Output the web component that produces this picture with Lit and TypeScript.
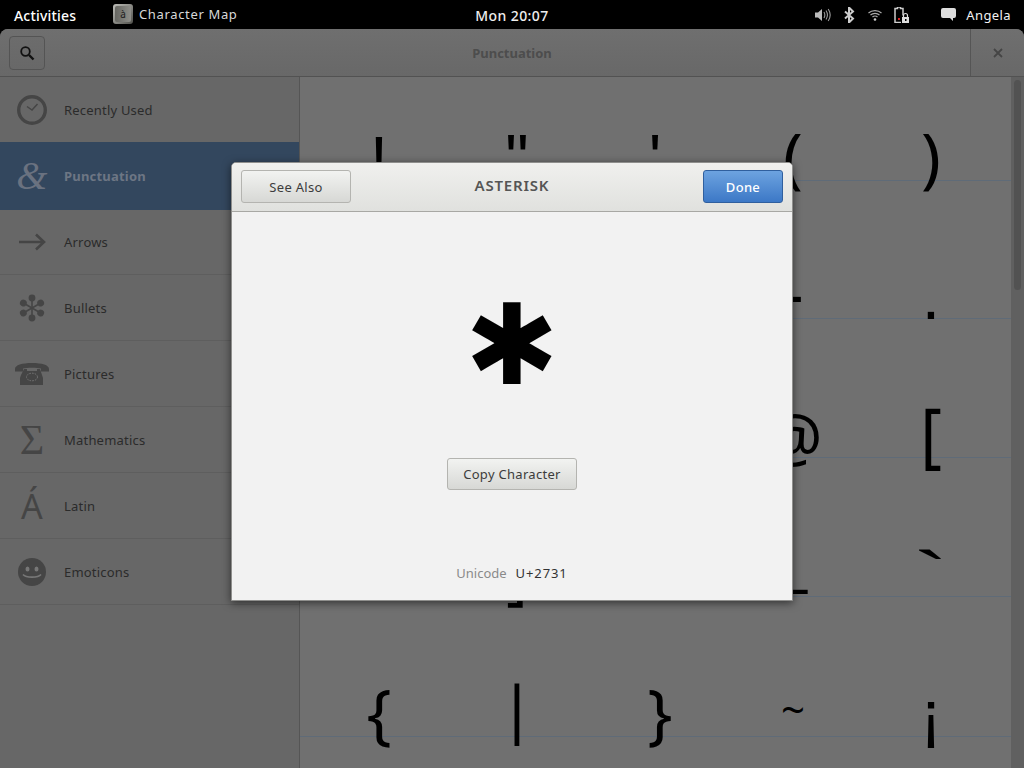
import { LitElement, html, css, svg } from "lit";
import { customElement } from "lit/decorators.js";

const ICON = "#454545";

const clock = html`<svg width="32" height="32" viewBox="0 0 32 32"><circle cx="16" cy="16" r="13.300" fill="none" stroke="${ICON}" stroke-width="3.400"/><path d="M11 12.500l5 3.500 5.500-6" fill="none" stroke="${ICON}" stroke-width="1.500"/></svg>`;
const amp = html`<span class="glyph amp">&amp;</span>`;
const arrow = html`<svg width="32" height="20" viewBox="0 0 32 20"><path d="M3 10h25M20 2.500l8 7.500-8 7.500" fill="none" stroke="${ICON}" stroke-width="2.600"/></svg>`;
const spokes = [0, 60, 120, 180, 240, 300];
const bullets = html`<svg width="32" height="32" viewBox="0 0 32 32">${spokes.map(
  (a) => svg`<g transform="rotate(${a} 16 16)"><path d="M16 16V6" stroke="${ICON}" stroke-width="1.600"/><circle cx="16" cy="6" r="3.400" fill="${ICON}"/></g>`
)}</svg>`;
const phone = html`<svg width="36" height="24" viewBox="0 0 36 24"><path d="M1 7C1 3 8 1 18 1s17 2 17 6v2.500h-8V6.500C23 5.500 13 5.500 9 6.500V9.500H1z" fill="${ICON}"/><path d="M10 7h3v2h10V7h3l2 6 1 3v7H6v-7l1-3z" fill="${ICON}"/><ellipse cx="18" cy="15" rx="5.500" ry="3.800" fill="none" stroke="#777" stroke-width="1" stroke-dasharray="1.500 1.200"/></svg>`;
const sigma = html`<span class="glyph sigma">Σ</span>`;
const aacute = html`<span class="glyph aacute">Á</span>`;
const smile = html`<svg width="30" height="30" viewBox="0 0 30 30"><circle cx="15" cy="15" r="14" fill="${ICON}"/><ellipse cx="10.500" cy="12" rx="2" ry="2.600" fill="#777"/><ellipse cx="19.500" cy="12" rx="2" ry="2.600" fill="#777"/><path d="M6 17.500c3 3.500 15 3.500 18 0" fill="none" stroke="#777" stroke-width="1.600"/></svg>`;

const rows = [
  { label: "Recently Used", icon: clock, cls: "first" },
  { label: "Punctuation", icon: amp, cls: "active" },
  { label: "Arrows", icon: arrow, cls: "third" },
  { label: "Bullets", icon: bullets, cls: "" },
  { label: "Pictures", icon: phone, cls: "" },
  { label: "Mathematics", icon: sigma, cls: "" },
  { label: "Latin", icon: aacute, cls: "" },
  { label: "Emoticons", icon: smile, cls: "" },
];

/* Cells wholly behind the dialog stay empty: the reference shows nothing of them. */
const chars = [
  ["!", '"', "'", "(", ")"],
  ["", "", "", "-", "."],
  ["", "", "", "@", "["],
  ["", "]", "", "_", "`"],
  ["{", "|", "}", "~", "¡"],
];

/* The reference's glyph font draws a few characters differently from Noto Sans. */
const LIB = `font-family:'Liberation Sans',sans-serif;`;
const tweak: Record<string, string> = {
  "~": "font-size:42px;transform:translateY(-2px)",
  _: "transform:translateY(-13px)",
  "`": `${LIB}transform:translate(0,3px) scale(1.6,0.95)`,
  "|": "transform:translateY(-4px) scaleY(0.94)",
  "-": "transform:translateY(-2px)",
  "}": "transform:translateX(5px)",
  "[": "transform:scaleY(1.09)",
  "@": "transform:translateY(3px)",
  "!": `${LIB}transform:translateY(5px)`,
  '"': `${LIB}transform:translateY(3px)`,
  "'": `${LIB}transform:translateY(3px)`,
  ".": `${LIB}transform:translateY(3px)`,
  "¡": `${LIB}transform:translateY(3px)`,
};

@customElement("app-root")
export class AppRoot extends LitElement {
  static styles = css`
    :host {
      display: flex;
      flex-direction: column;
      width: 1024px;
      height: 768px;
      overflow: hidden;
      background: #000;
      position: relative;
      font-family: "Noto Sans", "Open Sans", sans-serif;
    }
    .top {
      height: 29px;
      flex: none;
      display: flex;
      align-items: center;
      color: #f2f2f2;
      font-size: 13px;
      position: relative;
    }
    .activities { margin-left: 14px; width: 99px; font-weight: 500; font-size: 14px; letter-spacing: 0.2px; color: #fff; padding-top: 2px; }
    .appicon {
      width: 20px;
      height: 20px;
      padding: 2px;
      border-radius: 3px;
      background: linear-gradient(135deg, #bdbdb8 0%, #8a8a85 50%, #4f4f4a 100%);
      box-sizing: border-box;
      margin-top: -1px;
      margin-right: 6px;
    }
    .keycap {
      height: 100%;
      border-radius: 2px;
      background: linear-gradient(90deg, #666661, #8f8f8a);
      color: #1c1c1c;
      font-size: 10px;
      line-height: 16px;
      text-align: center;
    }
    .appname { color: #d8d8d8; letter-spacing: 0.65px; margin-top: -2px; }
    .clock { position: absolute; left: 0; right: 0; top: 6px; text-align: center; font-weight: 500; color: #eee; font-size: 14px; letter-spacing: 0.4px; }
    .status { margin-left: auto; display: flex; align-items: center; margin-right: 13px; }
    .status svg { display: block; }
    .s1 { margin-right: 13px; }
    .s2 { margin-right: 13px; }
    .s3 { margin-right: 12px; }
    .s4 { margin-right: 32px; }
    .user { color: #f2f2f2; margin-left: 10px; letter-spacing: 0.4px; }

    .win {
      flex: 1;
      min-height: 0;
      display: flex;
      flex-direction: column;
      border-radius: 8px 8px 0 0;
      overflow: hidden;
      background: #676767;
    }
    .head {
      height: 48px;
      box-sizing: border-box;
      flex: none;
      display: flex;
      align-items: center;
      justify-content: space-between;
      background: linear-gradient(#6f6f6f, #686868);
      border-bottom: 1px solid #525252;
      position: relative;
    }
    .search {
      width: 36px;
      height: 34px;
      margin-left: 9px;
      box-sizing: border-box;
      border: 1px solid #545454;
      border-radius: 4px;
      display: flex;
      align-items: center;
      justify-content: center;
      background: linear-gradient(#6c6c6c, #686868);
    }
    .title {
      position: absolute;
      left: 0;
      right: 0;
      text-align: center;
      font-weight: 700;
      font-size: 13px;
      color: #4d4d4d;
    }
    .close {
      width: 54px;
      box-sizing: border-box;
      align-self: stretch;
      border-left: 1px solid #555;
      display: flex;
      align-items: center;
      justify-content: center;
      position: relative;
    }
    .body { flex: 1; min-height: 0; display: flex; }
    .side {
      width: 300px;
      box-sizing: border-box;
      flex: none;
      border-right: 1px solid #555;
      background: #676767;
    }
    .row {
      height: 65px;
      box-sizing: border-box;
      display: flex;
      align-items: center;
      border-bottom: 1px solid #5e5e5e;
      color: #2b2b2b;
      font-size: 13px;
      letter-spacing: 0.2px;
    }
    .row + .row { height: 66px; }
    .row.first { border-bottom: none; }
    .row.row.third { height: 65px; }
    .row.row.active { height: 68px; background: #33475e; color: #6d7684; font-weight: 700; border-bottom: none; }
    .ic { width: 64px; display: flex; justify-content: center; flex: none; }
    .glyph { color: #454545; line-height: 36px; font-weight: 400; }
    .amp { font-family: "Liberation Serif", serif; font-style: italic; font-size: 40px; color: #6a7280; }
    .sigma { font-family: "Liberation Serif", serif; font-size: 42px; }
    .aacute { font-family: "Noto Sans", sans-serif; font-size: 34px; }

    .grid {
      flex: 1;
      min-width: 0;
      background: #707070;
      display: grid;
      grid-template-rows: 104px 138px 139px 139px 140px;
      align-content: start;
      overflow: hidden;
    }
    .gr {
      display: grid;
      grid-template-columns: repeat(5, 138px);
      padding-left: 10px;
      border-bottom: 1px solid #5f6b78;
    }
    .cell {
      display: flex;
      align-items: flex-end;
      justify-content: center;
      margin-bottom: -8px;
    }
    .ch {
      font-family: "Noto Sans", sans-serif;
      font-size: 66px;
      line-height: 66px;
      color: #000;
      display: block;
    }
    .scroll { width: 13px; flex: none; background: #606060; padding: 3px 3px 0; box-sizing: border-box; }
    .thumb { height: 210px; background: #525252; border-radius: 4px; }

    .dialog {
      position: absolute;
      left: 231px;
      top: 162px;
      width: 562px;
      height: 439px;
      box-sizing: border-box;
      border: 1px solid #8f8f8d;
      border-radius: 5px 5px 0 0;
      background: #f2f2f2;
      box-shadow: 0 2px 8px rgba(0, 0, 0, 0.55);
      display: flex;
      flex-direction: column;
      align-items: center;
    }
    .dhead {
      align-self: stretch;
      height: 49px;
      flex: none;
      box-sizing: border-box;
      display: flex;
      align-items: center;
      justify-content: space-between;
      padding: 0 9px 1px;
      background: linear-gradient(#f0f0ee, #e0e1de);
      border-bottom: 1px solid #a8a8a4;
      border-radius: 4px 4px 0 0;
      position: relative;
    }
    .dtitle {
      position: absolute;
      left: 0;
      right: 0;
      top: 12px;
      text-align: center;
      font-weight: 600;
      font-size: 15px;
      letter-spacing: 0.8px;
      color: #555;
      pointer-events: none;
    }
    .btn {
      box-sizing: border-box;
      height: 33px;
      border: 1px solid #b4b4b0;
      border-radius: 3px;
      background: linear-gradient(#f2f3f1, #d7d8d5);
      color: #3c3c3c;
      font-size: 13px;
      letter-spacing: 0.3px;
      display: flex;
      align-items: center;
      justify-content: center;
    }
    .also { width: 110px; }
    .done {
      width: 80px;
      background: linear-gradient(#6da3e0, #3c78c6);
      border-color: #2f5f9e;
      color: #fff;
      font-weight: 500;
    }
    .big {
      font-family: "DejaVu Sans", sans-serif;
      font-size: 112px;
      line-height: 160px;
      height: 160px;
      color: #000;
      margin-top: 53px;
    }
    .copy { width: 130px; height: 32px; margin-top: 33px; }
    .uni { margin-top: auto; margin-bottom: 18px; font-size: 13px; display: flex; gap: 9px; letter-spacing: 0.9px; color: #333; }
    .uni span { color: #8a8a8a; letter-spacing: 0; }
  `;

  render() {
    return html`
      <div class="top">
        <div class="activities">Activities</div>
        <div class="appicon"><div class="keycap">à</div></div>
        <div class="appname">Character Map</div>
        <div class="clock">Mon 20:07</div>
        <div class="status">
          <svg class="s1" width="16" height="14" viewBox="0 0 16 14"><path d="M0 4.500h3L7 1v12L3 9.500H0z" fill="#bbb"/><path d="M9 4c1 1.800 1 4.200 0 6M11 2.500c1.800 2.800 1.800 6.200 0 9M13.200 1c2.400 3.600 2.400 8.400 0 12" fill="none" stroke="#999" stroke-width="1.100"/></svg>
          <svg class="s2" width="11" height="16" viewBox="0 0 11 16"><path d="M1 4.500l8 7-4 4V.5l4 4-8 7" fill="none" stroke="#ccc" stroke-width="2"/></svg>
          <svg class="s3" width="14" height="12" viewBox="0 0 14 12"><path d="M.5 4c3.500-3.200 9.500-3.200 13 0M2.500 6c2.500-2.200 6.500-2.200 9 0M4.500 8c1.300-1.100 3.700-1.100 5 0" fill="none" stroke="#aaa" stroke-width="1.200"/><circle cx="7" cy="10.500" r="1.300" fill="#ccc"/></svg>
          <svg class="s4" width="15" height="16" viewBox="0 0 15 16"><path d="M3.500 0h3v1.500H9v14H1V1.500h2.500z" fill="none" stroke="#ccc" stroke-width="1.500"/><rect x="4" y="11" width="2" height="2" fill="#d22"/><rect x="7" y="8.500" width="8" height="7.500" fill="#000"/><rect x="8" y="10" width="7" height="6" fill="#ddd"/><path d="M9.500 10V8.500a2 2 0 0 1 4 0V10" fill="none" stroke="#ddd" stroke-width="1.200"/><rect x="11" y="12" width="1.500" height="2" fill="#000"/></svg>
          <svg width="15" height="13" viewBox="0 0 15 13"><path d="M2 0h11a2 2 0 0 1 2 2v6a2 2 0 0 1-2 2h-1v3l-3-3H2a2 2 0 0 1-2-2V2a2 2 0 0 1 2-2z" fill="#ddd"/></svg>
          <div class="user">Angela</div>
        </div>
      </div>
      <div class="win">
        <div class="head">
          <div class="title">Punctuation</div>
          <div class="search">
            <svg width="16" height="16" viewBox="0 0 16 16"><circle cx="6.500" cy="6.500" r="4.300" fill="none" stroke="#111" stroke-width="1.800"/><path d="M10 10l4.500 4.500" stroke="#111" stroke-width="2.400"/></svg>
          </div>
          <div class="close">
            <svg width="10" height="10" viewBox="0 0 10 10"><path d="M1 1l8 8M9 1l-8 8" stroke="#454545" stroke-width="1.800"/></svg>
          </div>
        </div>
        <div class="body">
          <div class="side">
            ${rows.map(
              (r) => html`<div class="row ${r.cls}"><div class="ic">${r.icon}</div><div>${r.label}</div></div>`
            )}
          </div>
          <div class="grid">
            ${chars.map(
              (row) =>
                html`<div class="gr">${row.map(
                  (c) => html`<div class="cell"><span class="ch" style=${tweak[c] ?? ""}>${c}</span></div>`
                )}</div>`
            )}
          </div>
          <div class="scroll"><div class="thumb"></div></div>
        </div>
      </div>
      <div class="dialog">
        <div class="dhead">
          <div class="dtitle">ASTERISK</div>
          <div class="btn also">See Also</div>
          <div class="btn done">Done</div>
        </div>
        <div class="big">✱</div>
        <div class="btn copy">Copy Character</div>
        <div class="uni"><span>Unicode</span>U+2731</div>
      </div>
    `;
  }
}
